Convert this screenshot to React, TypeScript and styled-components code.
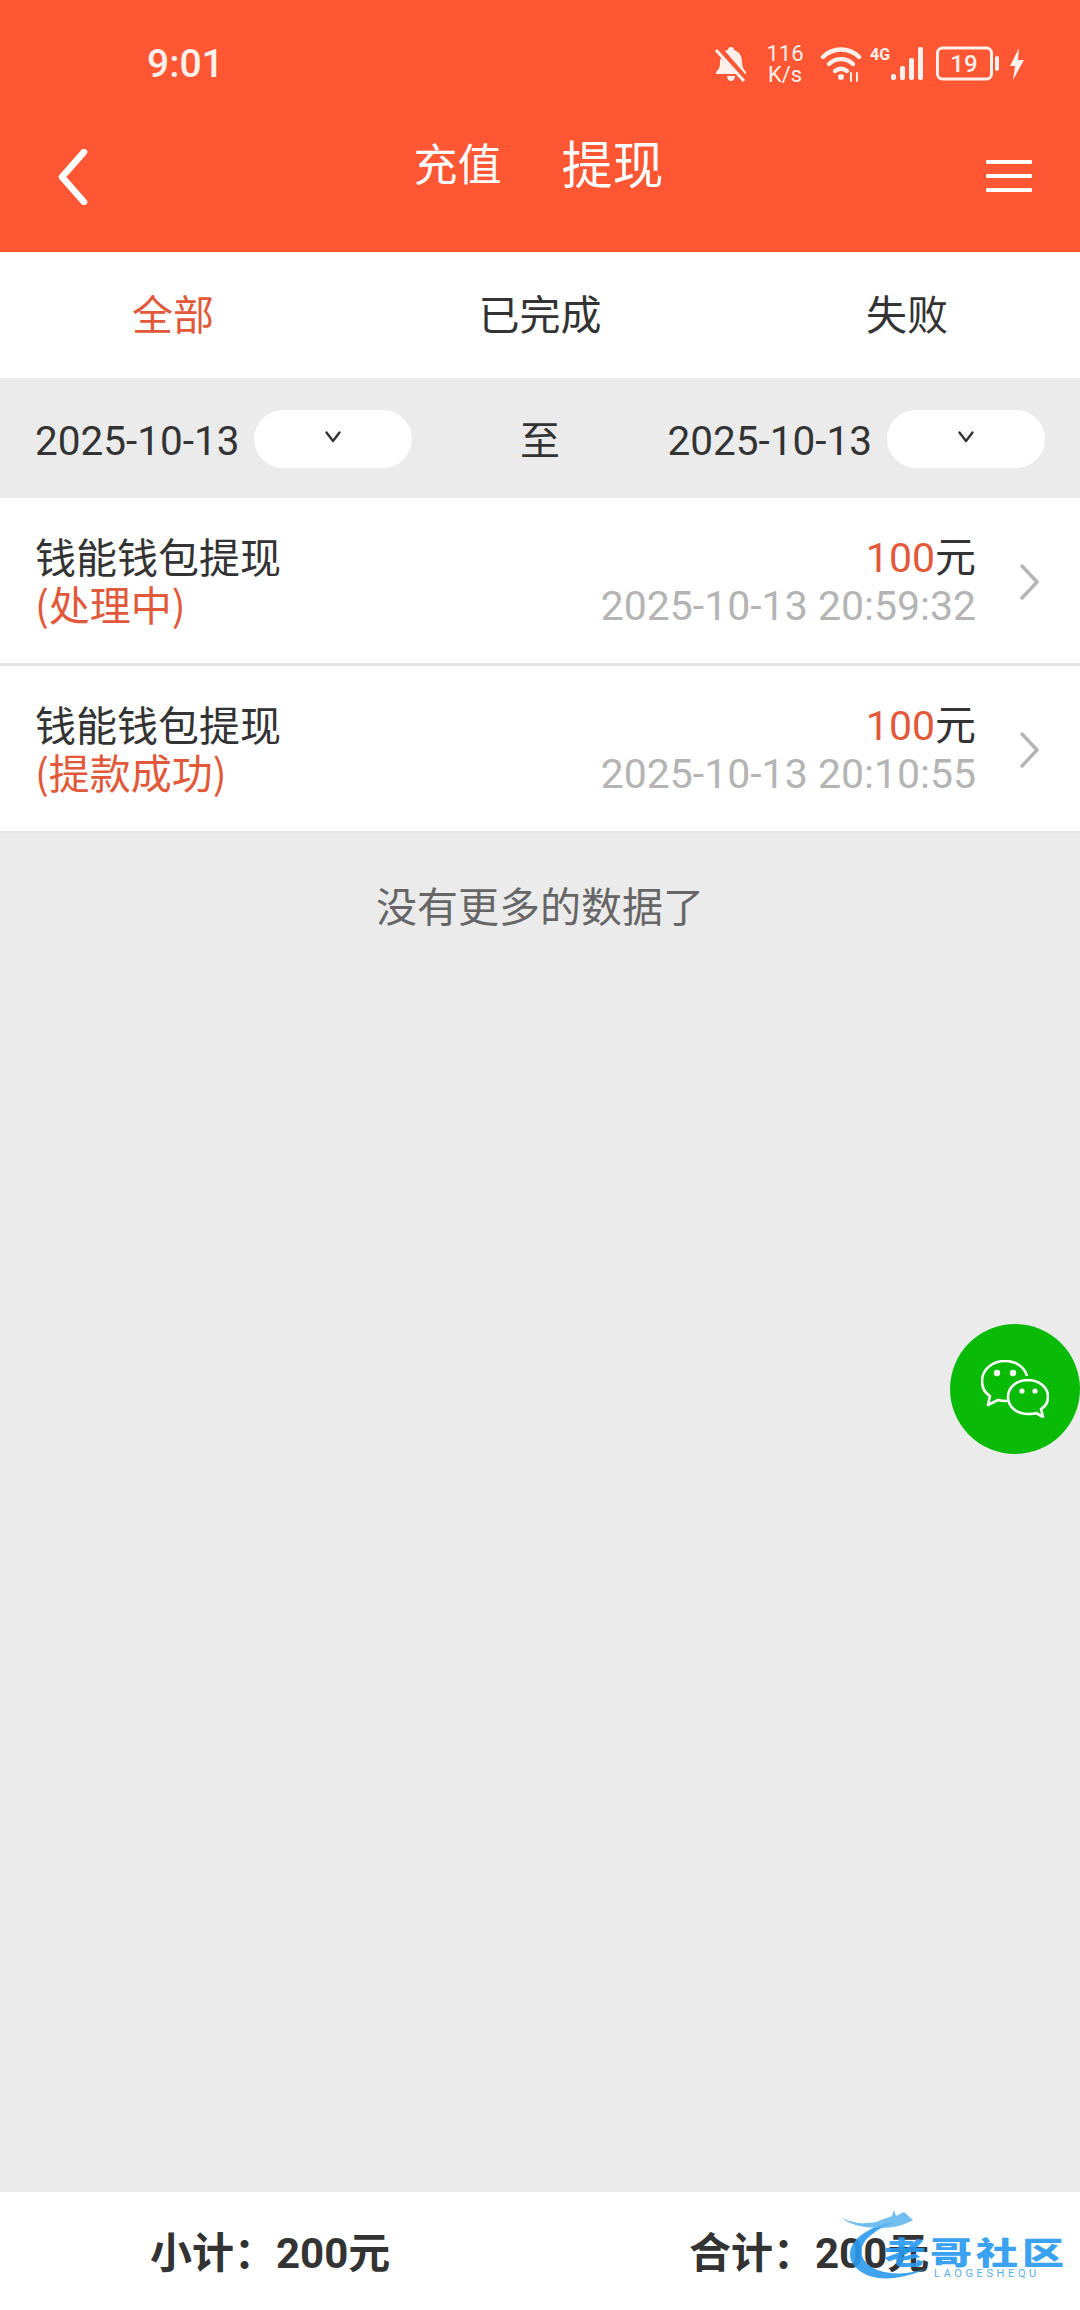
import styled, { createGlobalStyle } from 'styled-components';

const GlobalStyle = createGlobalStyle`
  html, body { margin: 0; padding: 0; background: #ebebeb; }
  * { box-sizing: border-box; }
  body { font-family: Roboto, "Noto Sans CJK SC", sans-serif; color: #333; }
`;

const Page = styled.div`
  position: relative;
  width: 1080px;
  height: 2310px;
  display: flex;
  flex-direction: column;
  overflow: hidden;
  background: #ebebeb;
`;

const Header = styled.header`
  height: 252px;
  background: #ff5733;
  color: #fff;
  flex: none;
`;

const StatusBar = styled.div`
  height: 126px;
  padding: 2px 55px 0 147px;
  display: flex;
  align-items: center;
  justify-content: space-between;
  color: #fff0ec;
`;

const Clock = styled.span`
  font-size: 39px;
  line-height: 1;
  font-weight: 500;
`;

const StatusIcons = styled.div`
  display: flex;
  align-items: center;
`;

const NetSpeed = styled.div`
  width: 40px;
  margin: 0 15px 0 17px;
  font-size: 22px;
  line-height: 21px;
  font-weight: 400;
  text-align: center;
`;

const Nav = styled.nav`
  height: 126px;
  padding: 0 48px 24px 58px;
  display: flex;
  justify-content: space-between;
  align-items: center;
`;

const NavTitles = styled.div`
  display: flex;
  align-items: center;
  gap: 60px;
  margin: -30px 0 0 3px;
`;

const NavTitle = styled.span<{ $active?: boolean }>`
  font-family: "Noto Sans CJK SC", sans-serif;
  font-size: ${p => (p.$active ? 51 : 44)}px;
  line-height: 60px;
`;

const Tabs = styled.div`
  height: 126px;
  flex: none;
  display: grid;
  grid-template-columns: 346px 388px 346px;
  background: #fff;
`;

const Tab = styled.div<{ $active?: boolean }>`
  display: flex;
  align-items: center;
  justify-content: center;
  padding-bottom: 6px;
  font-family: "Noto Sans CJK SC", sans-serif;
  font-size: 41px;
  color: ${p => (p.$active ? '#e2583a' : '#333')};
`;

const DateBar = styled.div`
  height: 120px;
  flex: none;
  padding: 0 35px;
  display: flex;
  align-items: center;
  justify-content: space-between;
  background: #ebebeb;
`;

const DateField = styled.div`
  display: flex;
  align-items: center;
  gap: 15px;
  font-size: 40.500px;
  line-height: 58px;
`;

const DateText = styled.span`
  position: relative;
  top: 3px;
`;

const Select = styled.div`
  width: 158px;
  height: 58px;
  margin-top: 2px;
  border-radius: 29px;
  background: #fff;
  display: flex;
  align-items: center;
  justify-content: center;
  padding-bottom: 4px;
`;

const To = styled.span`
  font-family: "Noto Sans CJK SC", sans-serif;
  font-size: 40px;
`;

const Row = styled.div`
  height: 168px;
  flex: none;
  padding: 0 39px 0 35px;
  display: flex;
  align-items: center;
  background: #fff;
  border-bottom: 3px solid #e6e6e6;
`;

const RowLeft = styled.div`
  flex: 1;
  font-family: "Noto Sans CJK SC", sans-serif;
  font-size: 41px;
  line-height: 48px;
  margin-top: -3px;
`;

const Status = styled.div`
  color: #e2583a;
`;

const RowRight = styled.div`
  text-align: right;
  font-size: 41px;
  line-height: 48px;
  margin-right: 43px;
  margin-top: -2px;
`;

const Amount = styled.span`
  color: #e2583a;
`;

const Yuan = styled.span`
  font-family: "Noto Sans CJK SC", sans-serif;
`;

const Time = styled.div`
  color: #b4b4b4;
`;

const ArrowIcon = styled.svg`
  margin-top: 2px;
`;

const NoMore = styled.div`
  text-align: center;
  font-family: "Noto Sans CJK SC", sans-serif;
  font-size: 41px;
  line-height: 48px;
  color: #666;
  margin-top: 46px;
  flex: 1;
`;

const Footer = styled.footer`
  height: 118px;
  flex: none;
  background: #fff;
  display: grid;
  grid-template-columns: 540px 540px;
  align-items: center;
  font-size: 42px;
  font-weight: 700;
`;

const Sum = styled.div<{ $left: number }>`
  padding-left: ${p => p.$left}px;
  padding-bottom: 4px;
`;

const ChatButton = styled.div`
  position: absolute;
  left: 950px;
  top: 1324px;
  width: 130px;
  height: 130px;
  border-radius: 50%;
  background: #09bb07;
  display: flex;
  align-items: center;
  justify-content: center;
`;

const Watermark = styled.div`
  position: absolute;
  left: 840px;
  top: 2210px;
  width: 230px;
  height: 90px;
  pointer-events: none;
`;

const MarkTitle = styled.div`
  position: absolute;
  left: 44px;
  top: 18px;
  font-family: "Noto Sans CJK SC", sans-serif;
  font-weight: 900;
  font-size: 42px;
  line-height: 46px;
  letter-spacing: 4px;
  white-space: nowrap;
  color: #2a9bf0;
  opacity: 0.92;
  transform: scaleY(0.72);
`;

const MarkSub = styled.div`
  position: absolute;
  left: 94px;
  top: 57px;
  font-family: Roboto, sans-serif;
  font-size: 11px;
  line-height: 14px;
  letter-spacing: 3.600px;
  white-space: nowrap;
  color: #5aaee8;
`;

const MarkDragon = styled.svg`
  position: absolute;
  left: 0;
  top: 0;
`;

const Chevron = () => (
  <svg width="22" height="16" viewBox="0 0 22 16" fill="none" stroke="#333" strokeWidth="2.400" strokeLinecap="round" strokeLinejoin="round">
    <path d="M4.500 3.500 11 12 17.500 3.500" />
  </svg>
);

const RowArrow = () => (
  <ArrowIcon width="22" height="36" viewBox="0 0 22 36" fill="none" stroke="#b4b4b4" strokeWidth="3.400" strokeLinecap="round" strokeLinejoin="round">
    <path d="M3 2 18 18 3 34" />
  </ArrowIcon>
);

const records = [
  { status: '(处理中)', time: '2025-10-13 20:59:32' },
  { status: '(提款成功)', time: '2025-10-13 20:10:55' },
];

export default function App() {
  return (
    <Page>
      <GlobalStyle />
      <Header>
        <StatusBar>
          <Clock>9:01</Clock>
          <StatusIcons>
            {/* bell muted */}
            <svg width="34" height="36" viewBox="0 0 34 36" fill="#fff0ec" style={{ marginLeft: 3 }}>
              <path d="M7 12c-1 2-1 3-1 5 0 4-1 6-4 9v2h22z" />
              <path d="M11 5c1-1 2-1 3-1 0-2 1-3 3-3s3 1 3 3c5 1.500 8 6 8 12 0 4 1 7 4 10v2h-1zM13 30h8c0 3-2 5-4 5s-4-2-4-5z" />
              <path d="M4 1 33 33" stroke="#ff5733" strokeWidth="3" />
              <path d="M2 4 30 35" stroke="#fff0ec" strokeWidth="3" />
            </svg>
            <NetSpeed>116<br />K/s</NetSpeed>
            {/* wifi */}
            <svg width="44" height="36" viewBox="0 0 44 36" fill="none" stroke="#fff0ec" strokeWidth="4.400" strokeLinecap="round">
              <path d="M3 11C13 1 29 1 39 11" />
              <path d="M9 18c7-6.500 17-6.500 24 0" />
              <path d="M15 25c4-3 8-3 12 0" />
              <circle cx="21" cy="31" r="3" fill="#fff0ec" stroke="none" />
              <path d="M31 27v8M37 27v8" strokeWidth="2" />
            </svg>
            {/* 4G + signal */}
            <svg width="66" height="36" viewBox="0 0 66 36" fill="#fff0ec" style={{ marginLeft: 6 }}>
              <text x="0" y="14" fontFamily="Roboto, sans-serif" fontSize="16" fontWeight="700">4G</text>
              <rect x="21" y="28" width="5" height="6" rx="2" />
              <rect x="30" y="20" width="5" height="14" rx="2" />
              <rect x="39" y="12" width="5" height="22" rx="2" />
              <rect x="48" y="1" width="5" height="33" rx="2" />
            </svg>
            {/* battery */}
            <svg width="64" height="36" viewBox="0 0 64 36" fill="none">
              <rect x="1.500" y="2" width="54" height="31" rx="5" stroke="#fff0ec" strokeWidth="3" />
              <text x="28" y="26" textAnchor="middle" fill="#fff0ec" fontFamily="Roboto, sans-serif" fontSize="24" fontWeight="500">19</text>
              <rect x="59" y="10" width="4" height="15" rx="2" fill="#fff0ec" />
            </svg>
            {/* bolt */}
            <svg width="16" height="32" viewBox="0 0 16 32" fill="#fff0ec" style={{ marginLeft: 9 }}>
              <path d="M10 0 1 18h5l-2 14L15 12H9z" />
            </svg>
          </StatusIcons>
        </StatusBar>
        <Nav>
          <svg width="30" height="56" viewBox="0 0 30 56" fill="none" stroke="#fff" strokeWidth="6.500" strokeLinecap="round" strokeLinejoin="round">
            <path d="M26 3 4 28 26 53" />
          </svg>
          <NavTitles>
            <NavTitle>充值</NavTitle>
            <NavTitle $active>提现</NavTitle>
          </NavTitles>
          <svg width="46" height="34" viewBox="0 0 46 34" fill="#fff">
            <rect x="0" y="0" width="46" height="4" rx="1" />
            <rect x="0" y="14" width="46" height="4" rx="1" />
            <rect x="0" y="28" width="46" height="4" rx="1" />
          </svg>
        </Nav>
      </Header>

      <Tabs>
        <Tab $active>全部</Tab>
        <Tab>已完成</Tab>
        <Tab>失败</Tab>
      </Tabs>

      <DateBar>
        <DateField><DateText>2025-10-13</DateText><Select><Chevron /></Select></DateField>
        <To>至</To>
        <DateField><DateText>2025-10-13</DateText><Select><Chevron /></Select></DateField>
      </DateBar>

      {records.map(r => (
        <Row key={r.time}>
          <RowLeft>
            钱能钱包提现
            <Status>{r.status}</Status>
          </RowLeft>
          <RowRight>
            <Amount>100</Amount><Yuan>元</Yuan>
            <Time>{r.time}</Time>
          </RowRight>
          <RowArrow />
        </Row>
      ))}

      <NoMore>没有更多的数据了</NoMore>

      <Footer>
        <Sum $left={150}>小计：200元</Sum>
        <Sum $left={149}>合计：200元</Sum>
      </Footer>

      <ChatButton>
        <svg width="68" height="58" viewBox="0 0 68 58" fill="none" stroke="#fff" strokeWidth="2.600" strokeLinejoin="round">
          <path d="M24 1C11 1 1 10 1 21c0 7 3 12 8 15l-2 9 10-5c3 1 6 1 9 1" />
          <path d="M24 1c10 0 19 5 22 15" />
          <path d="M47 20C36 20 27 27 27 37s9 17 20 17c3 0 6 0 8-1l7 4-2-8c5-3 7-7 7-12 0-10-9-17-21-17z" />
          <circle cx="16" cy="13" r="3.200" fill="#fff" stroke="none" />
          <circle cx="32" cy="13" r="3.200" fill="#fff" stroke="none" />
          <circle cx="41" cy="31" r="2.600" fill="#fff" stroke="none" />
          <circle cx="54" cy="31" r="2.600" fill="#fff" stroke="none" />
        </svg>
      </ChatButton>

      <Watermark>
        <MarkDragon width="110" height="90" viewBox="0 0 110 90" fill="none">
          <path d="M55 12C28 16 10 30 10 44c0 18 30 38 82 12-26 12-62 10-70-10-4-14 12-26 33-34z" fill="#2a9bf0" opacity=".9" />
          <path d="M2 8c14 6 22 6 34 4l16-6 2-6 2 6 8-4 9 8c-8 5-20 8-32 8C26 18 12 16 2 8z" fill="#5ab3ef" opacity=".85" />
        </MarkDragon>
        <MarkTitle>老哥社区</MarkTitle>
        <MarkSub>LAOGESHEQU</MarkSub>
      </Watermark>
    </Page>
  );
}
